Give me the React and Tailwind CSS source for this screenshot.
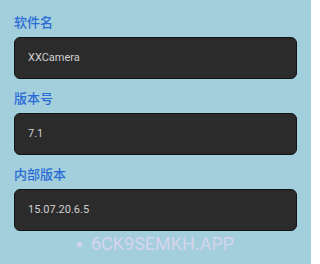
const fields = [
  { label: "软件名", value: "XXCamera" },
  { label: "版本号", value: "7.1" },
  { label: "内部版本", value: "15.07.20.6.5" },
];

export default function App() {
  return (
    <div
      className="w-[311px] h-[264px] overflow-hidden bg-[#a3cfdc] px-[14px] pt-[13px]"
      style={{ fontFamily: 'Roboto, "Noto Sans CJK SC", sans-serif' }}
    >
      {fields.map((f, i) => (
        <div key={f.label} className={i > 0 ? "mt-[10px]" : ""}>
          <div className="h-[20px] leading-[20px] text-[13px] font-medium text-[#2a6bd6]">
            {f.label}
          </div>
          <div className="mt-[4px] h-[42px] flex items-center pl-[13px] rounded-[6px] border border-[#141414] bg-[#2c2b2b] text-[11px] text-[#d0d0d0]">
            {f.value}
          </div>
        </div>
      ))}
      <div className="mt-[2px] flex justify-center items-center gap-[9px] text-[18px] leading-[22px] text-[#d6d4ee]">
        <span className="w-[5px] h-[5px] rounded-full bg-[#d6d4ee]" />
        <span>6CK9SEMKH.APP</span>
      </div>
    </div>
  );
}
